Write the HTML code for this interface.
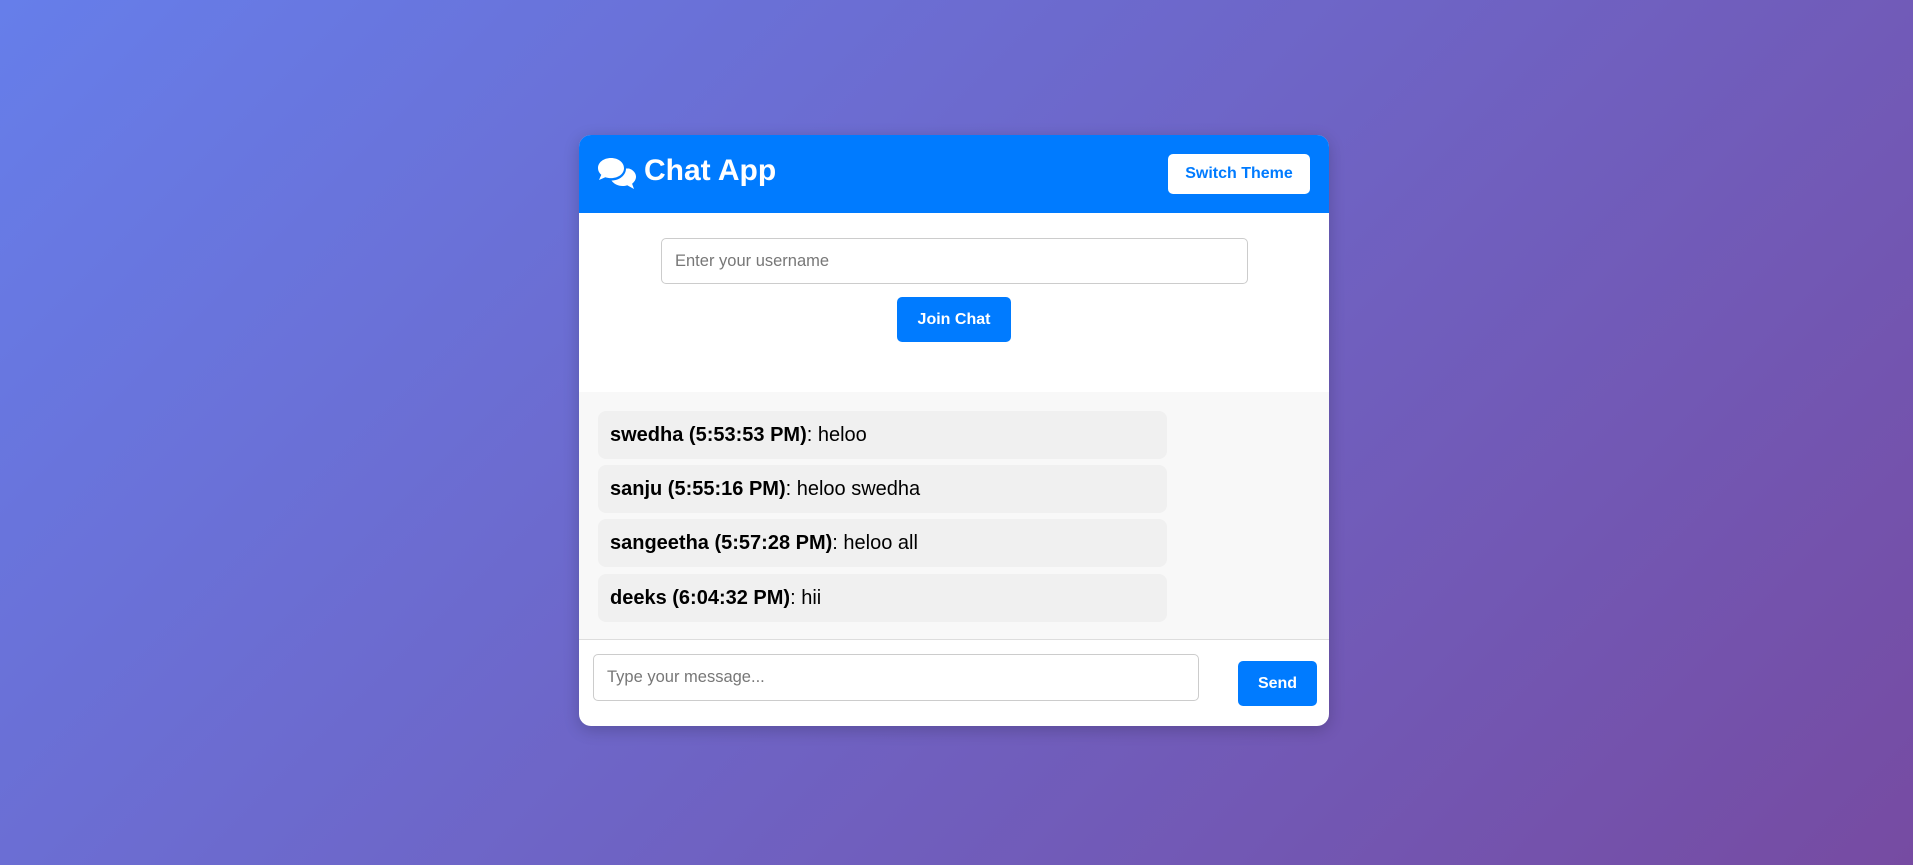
<!DOCTYPE html>
<html><head><meta charset="utf-8"><style>
*{box-sizing:border-box;margin:0;padding:0}
html,body{width:1913px;height:865px;overflow:hidden}
body{background:linear-gradient(135deg,#667eea 0%,#764ba2 100%);font-family:"Liberation Sans",Arial,sans-serif;position:relative}
.card{position:absolute;left:579px;top:135px;width:750px;height:591px;background:#fff;border-radius:12px;overflow:hidden;box-shadow:0 4px 16px rgba(0,0,0,.2)}
.hdr{height:78px;background:#007bff;position:relative;color:#fff}
.hdr svg{position:absolute;left:18px;top:22px}
.hdr h1{position:absolute;left:65px;top:19px;font-size:30px;font-weight:bold}
.sw{position:absolute;left:589px;top:19px;width:142px;height:40px;background:#fff;color:#007bff;border-radius:5px;font-weight:bold;font-size:16px;text-align:center;line-height:40px}
.uin{position:absolute;left:82px;top:103px;width:587px;height:46px;border:1px solid #ccc;border-radius:5px;padding-left:13px;line-height:44px;color:#777;font-size:16.5px}
.join{position:absolute;left:318px;top:162px;width:114px;height:45px;background:#007bff;color:#fff;border-radius:5px;font-weight:bold;font-size:16px;text-align:center;line-height:45px}
.msgs{position:absolute;left:0;top:257px;width:750px;height:248px;background:#f8f8f8;border-bottom:1px solid #ddd}
.m{position:absolute;left:19px;width:569px;height:48px;background:#f0f0f0;border-radius:8px;padding-left:12px;line-height:48px;font-size:20px;color:#000}
.min{position:absolute;left:14px;top:519px;width:606px;height:47px;border:1px solid #ccc;border-radius:5px;padding-left:13px;line-height:45px;color:#777;font-size:16.5px}
.send{position:absolute;left:659px;top:526px;width:79px;height:45px;background:#007bff;color:#fff;border-radius:5px;font-weight:bold;font-size:16px;text-align:center;line-height:45px}
</style></head><body>
<div class="card">
<div class="hdr">
<svg width="40" height="34" viewBox="0 0 40 34"><path fill="#fff" d="M14 1C6.5 1 1 5.5 1 11c0 2.6 1.2 5 3.3 6.8L2 23l6.3-2.8c1.8.6 3.7.9 5.7.9 7.5 0 13-4.5 13-10S21.5 1 14 1z"/><path fill="#fff" d="M29 11.5c0 6.8-6.6 12-14.5 12 2.3 3.4 6.4 5.5 11.1 5.5 1.6 0 3.2-.3 4.6-.8L37 32l-1.9-5.3C37.4 25 39 22.5 39 19.8c0-3.8-2.9-7-7-8.3-.9 0-2-.1-3 0z"/></svg>
<h1>Chat App</h1>
<div class="sw">Switch Theme</div>
</div>
<div class="uin">Enter your username</div>
<div class="join">Join Chat</div>
<div class="msgs">
<div class="m" style="top:19px"><b>swedha (5:53:53 PM)</b>: heloo</div>
<div class="m" style="top:73px"><b>sanju (5:55:16 PM)</b>: heloo swedha</div>
<div class="m" style="top:127px"><b>sangeetha (5:57:28 PM)</b>: heloo all</div>
<div class="m" style="top:182px"><b>deeks (6:04:32 PM)</b>: hii</div>
</div>
<div class="min">Type your message...</div>
<div class="send">Send</div>
</div>
</body></html>
